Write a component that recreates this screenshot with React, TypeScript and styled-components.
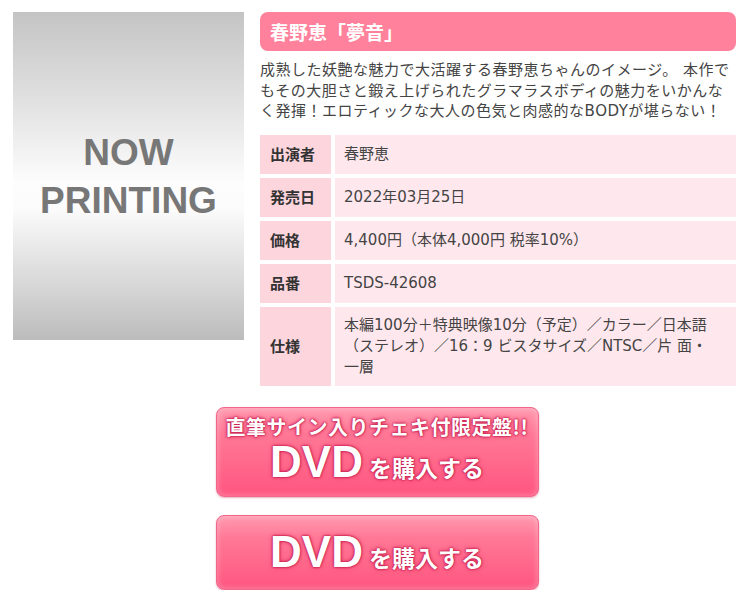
import React from "react";
import styled, { createGlobalStyle } from "styled-components";

const GlobalStyle = createGlobalStyle`
  body {
    margin: 0;
    background: #fff;
    font-family: "DejaVu Sans", "Noto Sans CJK JP", sans-serif;
    color: #444;
  }
`;

const Page = styled.div`
  width: 754px;
  padding: 12px 18px 0 13px;
  box-sizing: border-box;
`;

const Top = styled.div`
  display: flex;
  gap: 16px;
  align-items: flex-start;
`;

const Jacket = styled.div`
  width: 231px;
  height: 328px;
  flex-shrink: 0;
  display: flex;
  align-items: center;
  justify-content: center;
  background: linear-gradient(
    to bottom,
    #c4c4c4 0%,
    #e4e4e4 30%,
    #fdfdfd 52%,
    #fbfbfb 60%,
    #dcdcdc 80%,
    #bcbcbc 100%
  );
`;

const JacketText = styled.div`
  font-family: "Liberation Sans", Arial, sans-serif;
  font-weight: 700;
  font-size: 37px;
  line-height: 48px;
  color: #777;
  text-align: center;
  margin-top: 2px;
`;

const Info = styled.div`
  flex: 1;
  display: flex;
  flex-direction: column;
`;

const Title = styled.h1`
  margin: 0;
  height: 39px;
  display: flex;
  align-items: center;
  padding: 0 10px;
  border-radius: 8px;
  background: #ff819b;
  color: #fff;
  font-family: "Noto Sans CJK JP", sans-serif;
  font-size: 19px;
  font-weight: 700;
`;

const Lead = styled.p`
  margin: 9px 0 0;
  font-size: 15px;
  line-height: 20.5px;
  letter-spacing: 0.5px;
  color: #444;
`;

const Spec = styled.dl`
  margin: 13px 0 0;
  display: grid;
  grid-template-columns: 71px 1fr;
  gap: 4px;
`;

const Label = styled.dt`
  margin: 0;
  min-height: 39px;
  display: flex;
  align-items: center;
  padding: 0 10px;
  background: #fdd5dd;
  font-family: "Noto Sans CJK JP", sans-serif;
  font-size: 15px;
  line-height: 20px;
  font-weight: 700;
  color: #333;
`;

const Value = styled.dd`
  margin: 0;
  min-height: 39px;
  display: flex;
  align-items: center;
  padding: 8px 20px 8px 9px;
  box-sizing: border-box;
  background: #ffe8ed;
  font-size: 15px;
  line-height: 21px;
  color: #444;
`;

const Buttons = styled.div`
  display: flex;
  flex-direction: column;
  align-items: center;
  gap: 18px;
  margin-top: 21px;
  padding-left: 5px;
`;

const BuyButton = styled.a<{ $tall: boolean }>`
  width: 323px;
  height: ${(p) => (p.$tall ? 90 : 75)}px;
  box-sizing: border-box;
  display: flex;
  flex-direction: column;
  align-items: center;
  justify-content: ${(p) => (p.$tall ? "flex-start" : "center")};
  padding-top: ${(p) => (p.$tall ? 7 : 0)}px;
  border: 1px solid #f2668a;
  border-radius: 8px;
  background: linear-gradient(
    to bottom,
    #ff9ab0 0%,
    #ff7896 30%,
    #ff6a8c 60%,
    #ff5580 100%
  );
  box-shadow: inset 0 0 6px rgba(255, 255, 255, 0.35),
    0 1px 2px rgba(200, 60, 100, 0.4);
  text-decoration: none;
  color: #fff;
  font-family: "Noto Sans CJK JP", sans-serif;
  font-weight: 700;
  text-shadow: 0 0 1px #c01a4a, 0 0 2px #c01a4a, 0 0 3px #d8275a,
    0 0 5px #e0406c;
  cursor: pointer;
`;

const Limited = styled.span`
  font-size: 20px;
  line-height: 24px;
  letter-spacing: 0.5px;
`;

const BuyLine = styled.span`
  display: flex;
  align-items: baseline;
  gap: 6px;
  height: 46px;
`;

const Dvd = styled.span`
  font-family: "Liberation Sans", Arial, sans-serif;
  font-size: 44px;
  line-height: 46px;
  font-weight: 700;
`;

const BuyText = styled.span`
  font-size: 23px;
  font-weight: 700;
`;

const specs: [string, string][] = [
  ["出演者", "春野恵"],
  ["発売日", "2022年03月25日"],
  ["価格", "4,400円（本体4,000円 税率10%）"],
  ["品番", "TSDS-42608"],
  [
    "仕様",
    "本編100分＋特典映像10分（予定）／カラー／日本語（ステレオ）／16：9 ビスタサイズ／NTSC／片 面・一層",
  ],
];

export default function App() {
  return (
    <Page>
      <GlobalStyle />
      <Top>
        <Jacket>
          <JacketText>
            NOW
            <br />
            PRINTING
          </JacketText>
        </Jacket>
        <Info>
          <Title>春野恵「夢音」</Title>
          <Lead>
            成熟した妖艶な魅力で大活躍する春野恵ちゃんのイメージ。
            本作でもその大胆さと鍛え上げられたグラマラスボディの魅力をいかんなく発揮！エロティックな大人の色気と肉感的なBODYが堪らない！
          </Lead>
          <Spec>
            {specs.map(([k, v]) => (
              <React.Fragment key={k}>
                <Label>{k}</Label>
                <Value>{v}</Value>
              </React.Fragment>
            ))}
          </Spec>
        </Info>
      </Top>
      <Buttons>
        <BuyButton $tall>
          <Limited>直筆サイン入りチェキ付限定盤!!</Limited>
          <BuyLine>
            <Dvd>DVD</Dvd>
            <BuyText>を購入する</BuyText>
          </BuyLine>
        </BuyButton>
        <BuyButton $tall={false}>
          <BuyLine>
            <Dvd>DVD</Dvd>
            <BuyText>を購入する</BuyText>
          </BuyLine>
        </BuyButton>
      </Buttons>
    </Page>
  );
}
